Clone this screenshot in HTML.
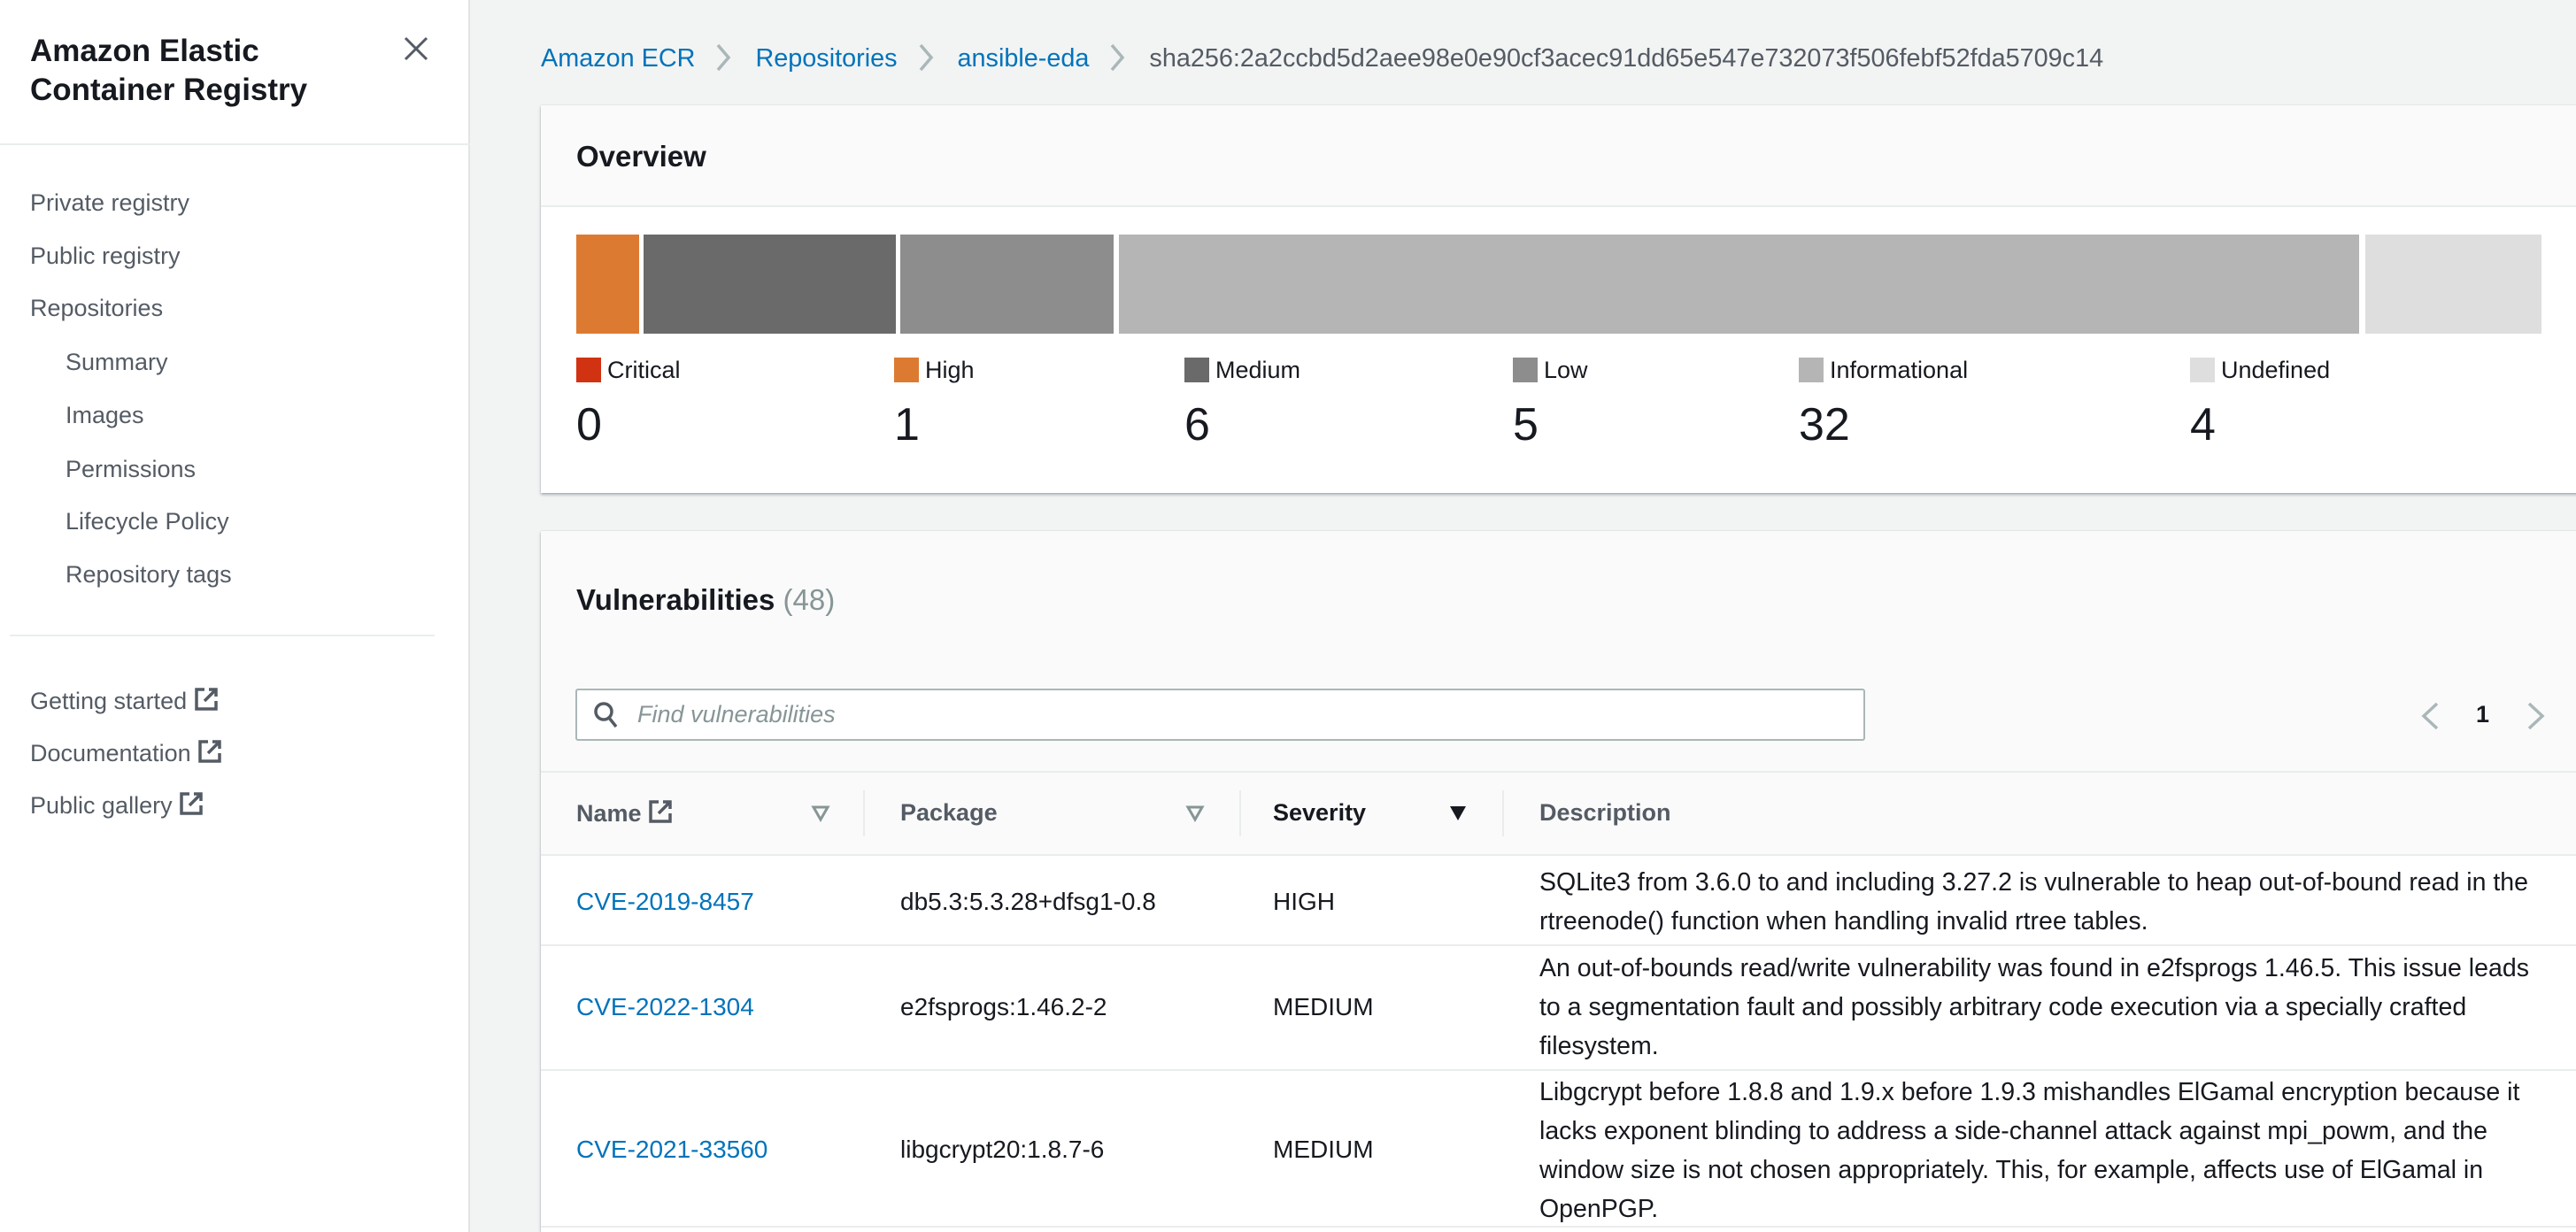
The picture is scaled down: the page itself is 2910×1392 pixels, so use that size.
<!DOCTYPE html>
<html><head><meta charset="utf-8"><style>
*{margin:0;padding:0;box-sizing:border-box}
html,body{width:2910px;height:1392px;overflow:hidden}
body{background:#f2f3f3;font-family:"Liberation Sans",sans-serif;color:#16191f;position:relative}
.a{position:absolute;white-space:nowrap}
#side{position:absolute;left:0;top:0;width:531px;height:1392px;background:#fff;border-right:2px solid #e3e5e5}
.nav{font-size:27px;color:#545b64;line-height:32px}
.lnk{color:#0073bb}
.panel{position:absolute;background:#fff;box-shadow:0 2px 3px rgba(0,28,36,.3),0 0 1px rgba(0,28,36,.2)}
.sq{position:absolute;width:28px;height:28px}
.lg{font-size:27px;line-height:32px}
.num{font-size:52px;line-height:56px}
.td{font-size:28px;line-height:44px}
.ds{font-size:28.5px;line-height:44px}
.hd{font-size:27px;font-weight:bold;color:#545b64}
.sep{position:absolute;width:2px;height:52px;top:893px;background:#eaeded}
.chev{display:inline-block;width:18px;height:32px;margin:0 27px 0 23px;vertical-align:-6px}
</style></head><body>
<div id="side">
<div class="a" style="left:34px;top:36px;font-size:35px;font-weight:bold;line-height:44px">Amazon Elastic<br>Container Registry</div>
<svg class="a" style="left:455px;top:40px" width="30" height="30" viewBox="0 0 30 30"><path d="M3 3L27 27M27 3L3 27" stroke="#545b64" stroke-width="3"/></svg>
<div class="a" style="left:0;top:162px;width:531px;height:2px;background:#eaeded"></div>
<div class="a nav" style="left:34px;top:213px">Private registry</div>
<div class="a nav" style="left:34px;top:273px">Public registry</div>
<div class="a nav" style="left:34px;top:332px">Repositories</div>
<div class="a nav" style="left:74px;top:393px">Summary</div>
<div class="a nav" style="left:74px;top:453px">Images</div>
<div class="a nav" style="left:74px;top:514px">Permissions</div>
<div class="a nav" style="left:74px;top:573px">Lifecycle Policy</div>
<div class="a nav" style="left:74px;top:633px">Repository tags</div>
<div class="a" style="left:11px;top:717px;width:480px;height:2px;background:#eaeded"></div>
<div class="a nav" style="left:34px;top:776px">Getting started <span style="display:inline-block;width:28px;height:28px;vertical-align:-3px"><svg width="28" height="28" viewBox="0 0 28 28"><path d="M12 3H3V25H25V16M17 3H25V11M25 3L12 16" stroke="#545b64" stroke-width="3.5" fill="none"/></svg></span></div>
<div class="a nav" style="left:34px;top:835px">Documentation <span style="display:inline-block;width:28px;height:28px;vertical-align:-3px"><svg width="28" height="28" viewBox="0 0 28 28"><path d="M12 3H3V25H25V16M17 3H25V11M25 3L12 16" stroke="#545b64" stroke-width="3.5" fill="none"/></svg></span></div>
<div class="a nav" style="left:34px;top:894px">Public gallery <span style="display:inline-block;width:28px;height:28px;vertical-align:-3px"><svg width="28" height="28" viewBox="0 0 28 28"><path d="M12 3H3V25H25V16M17 3H25V11M25 3L12 16" stroke="#545b64" stroke-width="3.5" fill="none"/></svg></span></div>
</div>

<div class="a" style="left:611px;top:49px;font-size:28.8px;line-height:34px">
<span class="lnk">Amazon ECR</span><svg class="chev" viewBox="0 0 18 32"><path d="M3 2L15 16L3 30" stroke="#aab7b8" stroke-width="3.5" fill="none"/></svg><span class="lnk">Repositories</span><svg class="chev" viewBox="0 0 18 32"><path d="M3 2L15 16L3 30" stroke="#aab7b8" stroke-width="3.5" fill="none"/></svg><span class="lnk">ansible-eda</span><svg class="chev" viewBox="0 0 18 32"><path d="M3 2L15 16L3 30" stroke="#aab7b8" stroke-width="3.5" fill="none"/></svg><span style="color:#545b64">sha256:2a2ccbd5d2aee98e0e90cf3acec91dd65e547e732073f506febf52fda5709c14</span></div>

<div class="panel" style="left:611px;top:119px;width:2320px;height:438px">
<div style="height:115px;background:#fafafa;border-bottom:2px solid #eaeded"></div>
</div>
<div class="a" style="left:651px;top:158px;font-size:33px;font-weight:bold">Overview</div>
<div class="a" style="left:651px;top:265px;width:71px;height:112px;background:#dd7a32"></div>
<div class="a" style="left:727px;top:265px;width:285px;height:112px;background:#6a6a6a"></div>
<div class="a" style="left:1017px;top:265px;width:241px;height:112px;background:#8d8d8d"></div>
<div class="a" style="left:1264px;top:265px;width:1401px;height:112px;background:#b5b5b5"></div>
<div class="a" style="left:2672px;top:265px;width:199px;height:112px;background:#dedede"></div>

<div class="sq" style="left:651px;top:404px;background:#d13212"></div><div class="a lg" style="left:686px;top:402px">Critical</div><div class="a num" style="left:651px;top:452px">0</div>
<div class="sq" style="left:1010px;top:404px;background:#dd7a32"></div><div class="a lg" style="left:1045px;top:402px">High</div><div class="a num" style="left:1010px;top:452px">1</div>
<div class="sq" style="left:1338px;top:404px;background:#6a6a6a"></div><div class="a lg" style="left:1373px;top:402px">Medium</div><div class="a num" style="left:1338px;top:452px">6</div>
<div class="sq" style="left:1709px;top:404px;background:#8d8d8d"></div><div class="a lg" style="left:1744px;top:402px">Low</div><div class="a num" style="left:1709px;top:452px">5</div>
<div class="sq" style="left:2032px;top:404px;background:#b5b5b5"></div><div class="a lg" style="left:2067px;top:402px">Informational</div><div class="a num" style="left:2032px;top:452px">32</div>
<div class="sq" style="left:2474px;top:404px;background:#dedede"></div><div class="a lg" style="left:2509px;top:402px">Undefined</div><div class="a num" style="left:2474px;top:452px">4</div>

<div class="panel" style="left:611px;top:600px;width:2320px;height:792px;background:#fafafa"></div>
<div class="a" style="left:611px;top:871px;width:2300px;height:2px;background:#eaeded"></div>
<div class="a" style="left:611px;top:965px;width:2300px;height:427px;background:#fff"></div>
<div class="a" style="left:611px;top:965px;width:2300px;height:2px;background:#eaeded"></div>
<div class="a" style="left:611px;top:1067px;width:2300px;height:2px;background:#eaeded"></div>
<div class="a" style="left:611px;top:1208px;width:2300px;height:2px;background:#eaeded"></div>
<div class="a" style="left:611px;top:1385px;width:2300px;height:2px;background:#eaeded"></div>

<div class="a" style="left:651px;top:659px;font-size:33px;font-weight:bold">Vulnerabilities <span style="font-weight:normal;color:#879596">(48)</span></div>
<div class="a" style="left:650px;top:778px;width:1457px;height:59px;background:#fff;border:2px solid #aab7b8;border-radius:3px"></div>
<svg class="a" style="left:670px;top:792px" width="30" height="32" viewBox="0 0 30 32"><circle cx="12" cy="12" r="9" stroke="#545b64" stroke-width="3.5" fill="none"/><path d="M18 19L26 29" stroke="#545b64" stroke-width="3.5"/></svg>
<div class="a" style="left:720px;top:792px;font-size:27px;font-style:italic;color:#879596">Find vulnerabilities</div>
<svg class="a" style="left:2733px;top:792px" width="24" height="34" viewBox="0 0 24 34"><path d="M20 3L5 17L20 31" stroke="#aab7b8" stroke-width="3.5" fill="none"/></svg>
<div class="a" style="left:2797px;top:792px;font-size:27px;font-weight:bold">1</div>
<svg class="a" style="left:2853px;top:792px" width="24" height="34" viewBox="0 0 24 34"><path d="M4 3L19 17L4 31" stroke="#aab7b8" stroke-width="3.5" fill="none"/></svg>

<div class="a hd" style="left:651px;top:903px">Name <span style="display:inline-block;width:28px;height:28px;vertical-align:-3px"><svg width="28" height="28" viewBox="0 0 28 28"><path d="M12 3H3V25H25V16M17 3H25V11M25 3L12 16" stroke="#545b64" stroke-width="3.5" fill="none"/></svg></span></div>
<svg class="a" style="left:916px;top:908px" width="22" height="22" viewBox="0 0 22 22"><path d="M3 4H19L11 18Z" stroke="#879596" stroke-width="3" fill="none"/></svg>
<div class="sep" style="left:975px"></div>
<div class="a hd" style="left:1017px;top:903px">Package</div>
<svg class="a" style="left:1339px;top:908px" width="22" height="22" viewBox="0 0 22 22"><path d="M3 4H19L11 18Z" stroke="#879596" stroke-width="3" fill="none"/></svg>
<div class="sep" style="left:1400px"></div>
<div class="a hd" style="left:1438px;top:903px;color:#16191f">Severity</div>
<svg class="a" style="left:1636px;top:908px" width="22" height="22" viewBox="0 0 22 22"><path d="M2 3H20L11 19Z" fill="#16191f"/></svg>
<div class="sep" style="left:1697px"></div>
<div class="a hd" style="left:1739px;top:903px">Description</div>

<div class="a td lnk" style="left:651px;top:997px">CVE-2019-8457</div>
<div class="a td" style="left:1017px;top:997px">db5.3:5.3.28+dfsg1-0.8</div>
<div class="a td" style="left:1438px;top:997px">HIGH</div>
<div class="a ds" style="left:1739px;top:975px">SQLite3 from 3.6.0 to and including 3.27.2 is vulnerable to heap out-of-bound read in the<br>rtreenode() function when handling invalid rtree tables.</div>

<div class="a td lnk" style="left:651px;top:1116px">CVE-2022-1304</div>
<div class="a td" style="left:1017px;top:1116px">e2fsprogs:1.46.2-2</div>
<div class="a td" style="left:1438px;top:1116px">MEDIUM</div>
<div class="a ds" style="left:1739px;top:1072px">An out-of-bounds read/write vulnerability was found in e2fsprogs 1.46.5. This issue leads<br>to a segmentation fault and possibly arbitrary code execution via a specially crafted<br>filesystem.</div>

<div class="a td lnk" style="left:651px;top:1277px">CVE-2021-33560</div>
<div class="a td" style="left:1017px;top:1277px">libgcrypt20:1.8.7-6</div>
<div class="a td" style="left:1438px;top:1277px">MEDIUM</div>
<div class="a ds" style="left:1739px;top:1212px">Libgcrypt before 1.8.8 and 1.9.x before 1.9.3 mishandles ElGamal encryption because it<br>lacks exponent blinding to address a side-channel attack against mpi_powm, and the<br>window size is not chosen appropriately. This, for example, affects use of ElGamal in<br>OpenPGP.</div>
</body></html>
